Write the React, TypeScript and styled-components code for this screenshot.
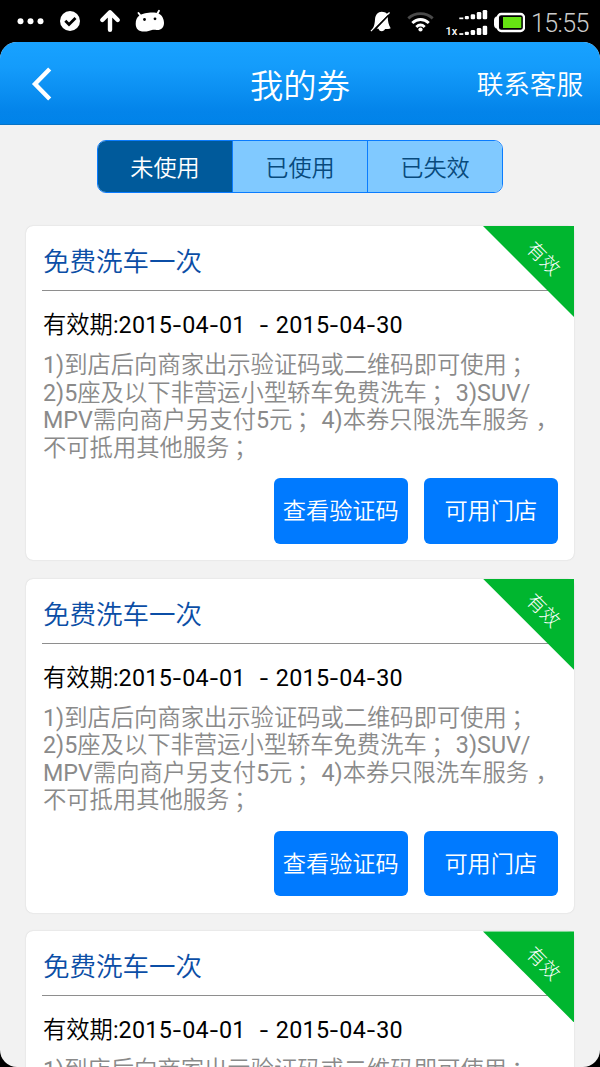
import React from "react";
import styled, { createGlobalStyle } from "styled-components";

const GlobalStyle = createGlobalStyle`
  * { box-sizing: border-box; }
  body {
    margin: 0;
    background: #000;
    font-family: Roboto, "Noto Sans CJK SC", sans-serif;
    font-weight: 350;
  }
  button {
    font: inherit;
    border: 0;
    padding: 0;
    margin: 0;
    background: none;
    white-space: nowrap;
  }
`;

const Phone = styled.div`
  width: 600px;
  height: 1067px;
  overflow: hidden;
  display: flex;
  flex-direction: column;
  background: #000;
`;

const StatusBar = styled.div`
  flex: none;
  height: 42px;
  display: flex;
  align-items: center;
  justify-content: space-between;
  padding-right: 10px;
`;

const StatusGroup = styled.div`
  display: flex;
  align-items: center;
  height: 42px;
`;

const Clock = styled.span`
  width: 59px;
  margin-left: 6px;
  padding-top: 5px;
  font-size: 25px;
  line-height: 38px;
  letter-spacing: -0.6px;
  font-weight: 300;
  color: #ccc;
  white-space: nowrap;
`;

const Screen = styled.div`
  flex: none;
  height: 1025px;
  border-radius: 17px;
  overflow: hidden;
  background: #f2f2f2;
`;

const Header = styled.header`
  height: 83px;
  display: grid;
  grid-template-columns: 150px 1fr 150px;
  align-items: center;
  background: linear-gradient(#18a2ff, #149cfb 30%, #0384ea 85%, #0083e9);
  border-bottom: 1px solid #0873c6;
  color: #fff;
`;

const BackButton = styled.button`
  display: flex;
  padding: 1px 0 0 30px;
`;

const HeaderTitle = styled.h1`
  margin: 0;
  font-size: 33.3px;
  font-weight: inherit;
  line-height: 48px;
  padding-top: 7px;
  text-align: center;
`;

const HeaderAction = styled.button`
  font-size: 26.6px;
  line-height: 40px;
  color: #fff;
  text-align: right;
  padding: 4px 17px 0 0;
`;

const Tabs = styled.div`
  display: flex;
  width: 406px;
  height: 53px;
  margin: 15px auto 33px 97px;
  border: 1.5px solid #0a7cff;
  border-radius: 9px;
  overflow: hidden;
`;

const Tab = styled.button<{ $active?: boolean }>`
  flex: 1;
  font-size: 23.2px;
  line-height: 48px;
  padding-top: 3px;
  color: ${(p) => (p.$active ? "#fff" : "#084a7c")};
  background: ${(p) => (p.$active ? "#005a9b" : "#80c9ff")};
  & + & { border-left: 1.5px solid #0a7cff; }
`;

const CardList = styled.main`
  display: flex;
  flex-direction: column;
  gap: 18.7px;
  padding: 0 26px;
`;

const Card = styled.article`
  position: relative;
  flex: none;
  height: 334px;
  padding: 0 16px;
  border-radius: 7px;
  background: #fff;
  box-shadow: 0 0 1.5px rgba(0, 0, 0, 0.18);
`;

const CardTitle = styled.h2`
  margin: 0;
  height: 65px;
  padding: 16px 0 0 1px;
  border-bottom: 1px solid #8e8e8e;
  font-size: 26.5px;
  line-height: 40px;
  font-weight: inherit;
  color: #0b4ea6;
`;

const Validity = styled.p`
  margin: 0;
  padding: 18px 0 0 1px;
  height: 61px;
  font-size: 23.3px;
  line-height: 32px;
  color: #000;
  white-space: pre;
`;

const Terms = styled.div`
  height: 126.4px;
  padding-left: 1px;
  font-size: 23.3px;
  line-height: 27.6px;
  color: #8a8a8a;
`;

const TermLine = styled.div`
  height: 27.6px;
  white-space: pre;
`;

const Latin = styled.span<{ $spacing?: number }>`
  font-weight: 400;
  letter-spacing: ${(p) => p.$spacing ?? 0}px;
`;

const Dash = styled.span`
  display: inline-block;
  width: 10px;
  text-align: center;
  letter-spacing: 0;
  transform: scaleX(1.3);
`;

const Mark = styled.span<{ $shift?: number }>`
  padding-left: ${(p) => p.$shift ?? 4.5}px;
  margin-right: ${(p) => -(p.$shift ?? 4.5)}px;
`;

const Actions = styled.div`
  display: flex;
  justify-content: flex-end;
  gap: 16.5px;
  padding-right: 0.5px;
`;

const ActionButton = styled.button`
  width: 133.5px;
  height: 65.3px;
  border-radius: 6px;
  background: #007aff;
  color: #fff;
  font-size: 23.2px;
  line-height: 65px;
  padding-top: 1px;
`;

const Ribbon = styled.div`
  position: absolute;
  top: 0;
  right: 0;
  width: 91px;
  height: 91px;
  display: flex;
  align-items: center;
  justify-content: center;
  padding: 0 0 26px 30px;
  background: #00b62f;
  clip-path: polygon(0 0, 100% 0, 100% 100%);
`;

const RibbonText = styled.span`
  font-size: 19px;
  line-height: 20px;
  font-weight: 300;
  color: #fff;
  white-space: nowrap;
  transform: rotate(45deg);
`;

const NotificationIcons = () => (
  <svg width="180" height="42" viewBox="0 0 180 42" fill="#fff">
    <circle cx="20.5" cy="21.3" r="3" />
    <circle cx="30.5" cy="21.3" r="3" />
    <circle cx="40.5" cy="21.3" r="3" />
    <circle cx="70" cy="21" r="10" />
    <path d="M65.300 20.700l3.700 3.700 6.500-6.500" fill="none" stroke="#000" strokeWidth="2.800" />
    <path d="M110 29.700V12.500M102.300 20l7.700-7.700 7.700 7.700" fill="none" stroke="#fff" strokeWidth="4.400" strokeLinecap="round" strokeLinejoin="round" />
    <path d="M138.500 13l3 4M159 10.800l-2.500 4.500" stroke="#fff" strokeWidth="1.900" strokeLinecap="round" />
    <path d="M139.500 15.500c4-3 15-4 19-2 3.500 1.500 5.500 5.500 5.500 9.500 0 4.500-3 7-6.500 7-2.500 0-3.500-.5-5.500 0-2.500.6-4 1.600-8 1.600-5.500 0-8.300-3.100-8.300-7.600 0-4 1-6.500 3.800-8.500z" />
    <circle cx="144.500" cy="19.500" r="1.400" fill="#000" />
    <circle cx="155" cy="18.800" r="1.400" fill="#000" />
  </svg>
);

const SystemIcons = () => (
  <svg width="160" height="42" viewBox="365 0 160 42" fill="#fff">
    <path d="M370.500 30.800c3-2.500 4.200-5.500 4.500-11.300.3-4.800 3-7.700 6.700-7.700 2.200 0 4 .7 5.200 1.900l2.300-1.700.8.900-18.700 18.500z" />
    <path d="M376.500 28.500l11.300-11.700c-.1 4.700.9 8.200 2.900 11.500-1.500.7-3.700.8-5.700.8-.5 1.400-1.700 2.200-3.200 2.200-1.600 0-2.800-.8-3.300-2.500z" />
    <path d="M375.800 28.500l12.500-13" stroke="#000" strokeWidth="1.300" />
    <g fill="none" strokeWidth="2.900">
      <path d="M408.300 18.300c7-6.200 17.400-6.200 24.400 0" stroke="#4a4a4a" />
      <path d="M412.300 23c5-4.700 11.500-4.700 16.500 0M416.300 27c2.700-2.500 5.700-2.500 8.400 0" stroke="#fff" />
    </g>
    <circle cx="420.500" cy="29.500" r="2.100" />
    <rect x="459.300" y="17.500" width="4" height="1.700" />
    <rect x="464.800" y="16" width="4.100" height="3.200" rx="1" />
    <rect x="470.700" y="14.200" width="4.400" height="5" rx="1.300" />
    <rect x="476.800" y="12" width="4.500" height="7.200" rx="1.300" />
    <rect x="482.700" y="10" width="4.500" height="9.200" rx="1.300" />
    <rect x="459.300" y="33.200" width="4" height="1.700" />
    <rect x="464.800" y="31.800" width="4.100" height="3.200" rx="1" />
    <rect x="470.700" y="30" width="4.400" height="5" rx="1.300" />
    <rect x="476.800" y="28" width="4.500" height="7" rx="1.300" />
    <rect x="482.700" y="25.800" width="4.500" height="9.200" rx="1.300" />
    <text x="445.500" y="35" fontFamily="Roboto, sans-serif" fontSize="11" fontWeight="500">1x</text>
    <rect x="497.800" y="14" width="26.200" height="17" rx="3.500" fill="none" stroke="#fff" strokeWidth="2.300" />
    <path d="M498 16.500h-2q-2 1-2 3.500v5q0 2.500 2 3.500h2z" />
    <rect x="503" y="17" width="18.300" height="11" fill="#66e312" />
  </svg>
);

const BackIcon = () => (
  <svg width="24" height="34" viewBox="0 0 24 34" fill="none" stroke="#fff" strokeWidth="4.400">
    <path d="M19.700 2L5 17l14.700 15" />
  </svg>
);

const DateText = ({ parts }: { parts: string[] }) => (
  <Latin $spacing={0.3}>
    {parts.map((part, i) => (
      <React.Fragment key={i}>
        {i > 0 && <Dash>-</Dash>}
        {part}
      </React.Fragment>
    ))}
  </Latin>
);

const Coupon = () => (
  <Card>
    <CardTitle>免费洗车一次</CardTitle>
    <Validity>
      有效期<Latin>:</Latin>
      <DateText parts={["2015", "04", "01"]} />
      <Latin $spacing={0.9}>{"  "}<Dash>-</Dash>{" "}</Latin>
      <DateText parts={["2015", "04", "30"]} />
    </Validity>
    <Terms>
      <TermLine><Latin>1)</Latin>到店后向商家出示验证码或二维码即可使用<Mark>；</Mark></TermLine>
      <TermLine><Latin>2)5</Latin>座及以下非营运小型轿车免费洗车<Mark>；</Mark><Latin> 3)SUV/</Latin></TermLine>
      <TermLine><Latin>MPV</Latin>需向商户另支付<Latin>5</Latin>元<Mark>；</Mark><Latin> 4)</Latin>本券只限洗车服务<Mark $shift={6.5}>，</Mark></TermLine>
      <TermLine>不可抵用其他服务<Mark>；</Mark></TermLine>
    </Terms>
    <Actions>
      <ActionButton>查看验证码</ActionButton>
      <ActionButton>可用门店</ActionButton>
    </Actions>
    <Ribbon><RibbonText>有效</RibbonText></Ribbon>
  </Card>
);

export default function App() {
  return (
    <Phone>
      <GlobalStyle />
      <StatusBar>
        <NotificationIcons />
        <StatusGroup>
          <SystemIcons />
          <Clock>15:55</Clock>
        </StatusGroup>
      </StatusBar>
      <Screen>
        <Header>
          <BackButton aria-label="返回"><BackIcon /></BackButton>
          <HeaderTitle>我的券</HeaderTitle>
          <HeaderAction>联系客服</HeaderAction>
        </Header>
        <Tabs>
          <Tab $active>未使用</Tab>
          <Tab>已使用</Tab>
          <Tab>已失效</Tab>
        </Tabs>
        <CardList>
          <Coupon />
          <Coupon />
          <Coupon />
        </CardList>
      </Screen>
    </Phone>
  );
}
